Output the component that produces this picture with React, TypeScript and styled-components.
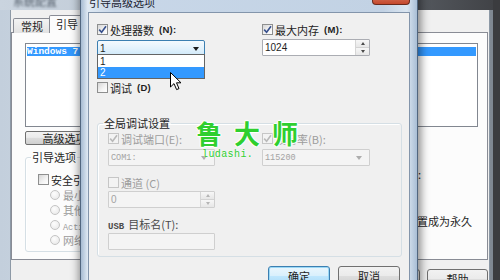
import React from 'react';
import styled, { createGlobalStyle, css } from 'styled-components';

const CJK = `'Noto Sans CJK SC', 'Noto Sans', sans-serif`;
const MONO = `'Liberation Mono', 'DejaVu Sans Mono', monospace`;
const SANS = `'Liberation Sans', Arial, sans-serif`;

const GlobalStyle = createGlobalStyle`
  html, body { margin: 0; padding: 0; }
  body {
    background: #3b3c3f;
    font-family: ${CJK};
    font-size: 11px;
    color: #1e1e1e;
  }
  * { box-sizing: border-box; }
`;

const Desktop = styled.div`
  position: relative;
  width: 500px;
  height: 280px;
  overflow: hidden;
  background: #3b3c3f;
  white-space: nowrap;
`;

/* ---------- 系统配置 (background window) ---------- */

const MainWindow = styled.div`
  position: absolute;
  z-index: 0;
  left: 0;
  top: -14px;
  width: 493px;
  height: 330px;
  display: flex;
  flex-direction: column;
  padding: 0 3px 0 10px;
  background: linear-gradient(90deg, #c3cfdc 0%, #d4dde7 40%, #b9c4d0 80%, #7e8791 100%);
`;

const MainTitleBar = styled.div`
  height: 24px;
  margin: 0 -3px 0 -10px;
  padding: 0 0 2px 13px;
  display: flex;
  align-items: flex-end;
  background: linear-gradient(90deg, #cad4df 0%, #bcc7d3 40%, #55595f 84%, #414347 100%);
`;

const MainTitle = styled.span`
  line-height: 14px;
  color: #56616d;
  filter: blur(0.8px);
`;

const MainClient = styled.div`
  flex: 1;
  display: flex;
  flex-direction: column;
  background: #f0f0f0;
  border-left: 1px solid #8d99a6;
  border-right: 1px solid #8d99a6;
`;

const TabStrip = styled.div`
  height: 23px;
  padding-left: 2px;
  margin-bottom: -1px;
  display: flex;
  align-items: flex-end;
  position: relative;
  z-index: 1;
`;

const Tab = styled.div<{ $active?: boolean }>`
  height: ${({ $active }) => ($active ? 18 : 15)}px;
  line-height: ${({ $active }) => ($active ? 16 : 14)}px;
  padding: 0 ${({ $active }) => ($active ? 6 : 7)}px;
  margin-left: ${({ $active }) => ($active ? -2 : 0)}px;
  border: 1px solid #898c95;
  border-bottom: none;
  border-radius: 2px 2px 0 0;
  background: ${({ $active }) => ($active ? '#fcfcfc' : 'linear-gradient(#f3f3f3, #e2e2e2)')};
`;

const TabPanel = styled.div`
  height: 228px;
  margin-right: 1px;
  padding: 10px 9px 0 13px;
  display: flex;
  flex-direction: column;
  border: 1px solid #898c95;
  background: #fcfcfc;
`;

const ListBox = styled.div`
  height: 84px;
  padding: 3px 1px;
  border: 1px solid #828790;
  background: #fff;
`;

const ListRow = styled.div<{ $selected?: boolean }>`
  height: 9px;
  line-height: 9px;
  font-family: ${MONO};
  font-size: 9.5px;
  font-weight: 700;
  color: ${({ $selected }) => ($selected ? '#fff' : '#1e1e1e')};
  background: ${({ $selected }) => ($selected ? '#3399ff' : 'transparent')};
`;

const PanelBody = styled.div`
  display: flex;
  margin-top: 4px;
`;

const LeftCol = styled.div`
  width: 290px;
  flex: none;
  display: flex;
  flex-direction: column;
`;

const ButtonLine = styled.div`
  display: flex;
  gap: 6px;
`;

const SmallButton = styled.div`
  width: 90px;
  height: 14px;
  line-height: 12px;
  text-align: center;
  border: 1px solid #707070;
  border-radius: 2px;
  background: linear-gradient(#f2f2f2 0%, #ebebeb 45%, #dddddd 50%, #cfcfcf 100%);

  &:first-child {
    width: 104px;
  }
`;

const GroupBox = styled.fieldset<{ $top: number }>`
  margin: ${({ $top }) => $top}px 0 0 0;
  padding: 0;
  min-width: 0;
  border: 1px solid #d5dfe5;
  border-radius: 3px;
  box-shadow: inset 1px 1px 0 #fff;
`;

const Legend = styled.legend<{ $lh: number }>`
  margin-left: 5px;
  padding: 0 1px;
  line-height: ${({ $lh }) => $lh}px;
  color: #1e1e1e;
`;

const BootGroupBody = styled.div`
  padding: 9px 0 4px 12px;
  display: flex;
  flex-direction: column;
`;

const RadioRow = styled.div`
  height: 15px;
  margin-left: 12px;
  display: flex;
  align-items: center;
  gap: 3px;
  color: #9a9a9a;
`;

const RadioDot = styled.span`
  width: 10px;
  height: 10px;
  border-radius: 50%;
  border: 1px solid #c4c4c4;
  background: radial-gradient(circle at 40% 35%, #fdfdfd, #e6e6e6);
`;

const Latin = styled.span`
  font-family: ${MONO};
  font-size: 8.5px;
`;

const RightCol = styled.div`
  flex: 1;
  min-width: 0;
  display: flex;
  flex-direction: column;
  align-items: flex-end;
`;

const TimeoutLabel = styled.div`
  margin: 36px 57px 0 0;
  line-height: 15px;
`;

const PermanentRow = styled.div`
  margin: 31px 6px 0 0;
`;

const MainFooter = styled.div`
  margin-top: 9px;
  padding-right: 1px;
  display: flex;
  justify-content: flex-end;
  gap: 7px;
`;

/* ---------- shared controls ---------- */

const Button = styled.div<{ $default?: boolean; $w: number }>`
  width: ${({ $w }) => $w}px;
  height: 21px;
  line-height: 19px;
  text-align: center;
  border: 1px solid #707070;
  border-radius: 3px;
  background: linear-gradient(#f2f2f2 0%, #ebebeb 45%, #dddddd 50%, #cfcfcf 100%);
  ${({ $default }) =>
    $default &&
    css`
      border-color: #3c7fb1;
      box-shadow: inset 0 0 0 1px #9ad8f6;
      background: linear-gradient(#eaf6fd 0%, #d9f0fc 45%, #bee6fd 50%, #a7d9f5 100%);
    `}
`;

const CheckRow = styled.div<{ $disabled?: boolean; $tone?: string }>`
  height: 15px;
  display: flex;
  align-items: center;
  gap: 2px;
  color: ${({ $disabled, $tone }) => $tone || ($disabled ? '#9d9d9d' : '#1e1e1e')};
`;

const Box = styled.span<{ $disabled?: boolean }>`
  width: 11px;
  height: 11px;
  flex: none;
  display: inline-flex;
  align-items: center;
  justify-content: center;
  border: 1px solid ${({ $disabled }) => ($disabled ? '#c6c6c6' : '#8e8f8f')};
  background: ${({ $disabled }) =>
    $disabled ? '#f3f3f3' : 'linear-gradient(135deg, #d6d6d6 0%, #f4f4f4 60%, #ffffff 100%)'};
`;

const Hint = styled.span`
  margin-left: 3px;
  font-family: ${SANS};
  font-size: 9.5px;
  font-weight: 700;
  letter-spacing: 0.3px;
`;

type CheckProps = { label: React.ReactNode; hint?: string; checked?: boolean; disabled?: boolean; tone?: string };

const Check = ({ label, hint, checked, disabled, tone }: CheckProps) => (
  <CheckRow $disabled={disabled} $tone={tone}>
    <Box $disabled={disabled}>
      {checked && (
        <svg width="9" height="9" viewBox="0 0 9 9">
          <path
            d="M1.2 4.6 L3.6 7.2 L8 1.2"
            fill="none"
            stroke={disabled ? '#b9b9b9' : '#37508d'}
            strokeWidth="1.6"
          />
        </svg>
      )}
    </Box>
    <span>{label}</span>
    {hint && <Hint>{hint}</Hint>}
  </CheckRow>
);

const Field = styled.div<{ $disabled?: boolean; $focused?: boolean; $top?: number }>`
  height: 17px;
  margin-top: ${({ $top }) => $top ?? 3}px;
  display: flex;
  align-items: stretch;
  border: 1px solid ${({ $disabled, $focused }) => ($focused ? '#3c7fb1' : $disabled ? '#cfcfcf' : '#abadb3')};
  border-radius: ${({ $focused }) => ($focused ? 2 : 1)}px;
  background: ${({ $disabled, $focused }) =>
    $focused ? 'linear-gradient(#f4fafe 0%, #e3f2fc 50%, #cde8f9 100%)' : $disabled ? '#f4f4f4' : '#fff'};
`;

const FieldText = styled.div<{ $mono?: boolean; $disabled?: boolean }>`
  flex: 1;
  padding-left: 2px;
  display: flex;
  align-items: center;
  font-family: ${({ $mono }) => ($mono ? MONO : SANS)};
  font-size: ${({ $mono }) => ($mono ? 8.5 : 10)}px;
  color: ${({ $disabled }) => ($disabled ? '#a3a3a3' : '#1e1e1e')};
`;

const DropArrow = styled.span<{ $disabled?: boolean; $right: number }>`
  align-self: center;
  margin-right: ${({ $right }) => $right}px;
  width: 0;
  height: 0;
  border-left: 3.5px solid transparent;
  border-right: 3.5px solid transparent;
  border-top: 4px solid ${({ $disabled }) => ($disabled ? '#adadad' : '#1b1b1b')};
`;

const SpinButtons = styled.div`
  width: 14px;
  display: flex;
  flex-direction: column;
  border-left: 1px solid #d6d6d6;
`;

const SpinHalf = styled.div<{ $down?: boolean; $disabled?: boolean }>`
  flex: 1;
  display: flex;
  align-items: center;
  justify-content: center;
  background: linear-gradient(#f7f7f7, #e7e7e7);
  border-top: ${({ $down }) => ($down ? '1px solid #d3d3d3' : 'none')};

  &::after {
    content: '';
    width: 0;
    height: 0;
    border-left: 2.5px solid transparent;
    border-right: 2.5px solid transparent;
    ${({ $down, $disabled }) =>
      $down
        ? `border-top: 3px solid ${$disabled ? '#b5b5b5' : '#4a4a4a'};`
        : `border-bottom: 3px solid ${$disabled ? '#b5b5b5' : '#4a4a4a'};`}
  }
`;

/* ---------- 引导高级选项 (dialog) ---------- */

const Dialog = styled.div`
  position: absolute;
  z-index: 1;
  left: 80px;
  top: -12px;
  width: 338px;
  height: 330px;
  padding: 0 7px;
  display: flex;
  flex-direction: column;
  border: 1px solid #51667f;
  border-radius: 7px 7px 0 0;
  background: linear-gradient(90deg, #a6bbd2 0%, #dfe9f3 2%, #c8d7e8 10%, #c2d2e4 90%, #dbe6f1 97%, #a9bed5 100%);
  box-shadow: 1px 0 8px 2px rgba(0, 0, 0, 0.45);
`;

const DialogTitleBar = styled.div`
  height: 23px;
  padding: 0 0 3px 1px;
  display: flex;
  align-items: flex-end;
`;

const DialogTitle = styled.span`
  line-height: 14px;
  color: #1a2230;
`;

const CloseButton = styled.div`
  position: absolute;
  top: -1px;
  right: 7px;
  width: 38px;
  height: 17px;
  border: 1px solid #6b2a1c;
  border-top: none;
  border-radius: 0 0 4px 4px;
  background: linear-gradient(#e8a58f 0%, #d5735a 50%, #c4482c 100%);
`;

const DialogClient = styled.div`
  flex: 1;
  padding: 9px 7px 0 8px;
  display: flex;
  flex-direction: column;
  background: #f0f0f0;
  border: 1px solid #8395ab;
`;

const TwoCols = styled.div<{ $first: number; $gap: number }>`
  display: grid;
  grid-template-columns: ${({ $first }) => $first}px 108px;
  column-gap: ${({ $gap }) => $gap}px;
`;

const Cell = styled.div`
  display: flex;
  flex-direction: column;
`;

const DropAnchor = styled.div`
  position: relative;
`;

const DropList = styled.div`
  position: absolute;
  top: 17px;
  left: 0;
  right: 0;
  z-index: 2;
  padding-top: 1px;
  border: 1px solid #646464;
  background: #fff;
`;

const DropItem = styled.div<{ $hot?: boolean }>`
  height: 11px;
  line-height: 11px;
  padding-left: 2px;
  font-family: ${SANS};
  font-size: 10px;
  color: ${({ $hot }) => ($hot ? '#fff' : '#1e1e1e')};
  background: ${({ $hot }) => ($hot ? '#3399ff' : '#fff')};
`;

const DebugRow = styled.div`
  margin-top: 23px;
`;

const GlobalGroupBody = styled.div`
  padding: 1px 0 6px 10px;
  display: flex;
  flex-direction: column;
`;

const Stack = styled.div`
  width: 107px;
  display: flex;
  flex-direction: column;
`;

const Spaced = styled.div<{ $top: number }>`
  margin-top: ${({ $top }) => $top}px;
`;

const UsbLabel = styled.div`
  height: 15px;
  line-height: 15px;
  color: #4a4a4a;
`;

const UsbText = styled.span`
  font-family: ${MONO};
  font-size: 9px;
  font-weight: 700;
  margin-right: 4px;
`;

const DialogFooter = styled.div`
  margin-top: 9px;
  padding-right: 2px;
  display: flex;
  justify-content: flex-end;
  gap: 8px;
`;

/* ---------- overlays ---------- */

const Watermark = styled.div`
  position: absolute;
  left: 196px;
  top: 120px;
  z-index: 5;
  display: flex;
  flex-direction: column;
  color: #2fcf2f;
  pointer-events: none;
`;

const MarkTitle = styled.div`
  font-size: 26px;
  line-height: 26px;
  font-weight: 700;
  letter-spacing: 12px;
  text-shadow: 1px 0 0 #fff, -1px 0 0 #fff, 0 1px 0 #fff, 0 -1px 0 #fff, 0 0 3px #fff;
`;

const MarkUrl = styled.div`
  margin: 3px 0 0 6px;
  font-family: ${MONO};
  font-size: 10px;
  line-height: 12px;
  letter-spacing: 0.4px;
  text-shadow: 0 0 2px #fff;
`;

const Cursor = styled.svg`
  position: absolute;
  left: 170px;
  top: 72px;
  z-index: 6;
`;

const Radio = ({ children }: { children: React.ReactNode }) => (
  <RadioRow>
    <RadioDot />
    <span>{children}</span>
  </RadioRow>
);

const App = () => {
  return (
    <>
      <GlobalStyle />
      <Desktop>
        <MainWindow>
          <MainTitleBar>
            <MainTitle>系统配置</MainTitle>
          </MainTitleBar>
          <MainClient>
            <TabStrip>
              <Tab>常规</Tab>
              <Tab $active>引导</Tab>
              <Tab>服务</Tab>
              <Tab>启动</Tab>
              <Tab>工具</Tab>
            </TabStrip>
            <TabPanel>
              <ListBox>
                <ListRow $selected>Windows 7 (C:\Windows) : 当前 OS; 默认 OS</ListRow>
              </ListBox>
              <PanelBody>
                <LeftCol>
                  <ButtonLine>
                    <SmallButton>高级选项(V)...</SmallButton>
                    <SmallButton>设为默认值(S)</SmallButton>
                    <SmallButton>删除(D)</SmallButton>
                  </ButtonLine>
                  <GroupBox $top={6}>
                    <Legend $lh={12}>引导选项</Legend>
                    <BootGroupBody>
                      <Check label="安全引导(F)" />
                      <Radio>最小(M)</Radio>
                      <Radio>其他外壳(L)</Radio>
                      <Radio>
                        <Latin>Active Directory</Latin> 修复(P)
                      </Radio>
                      <Radio>网络(N)</Radio>
                    </BootGroupBody>
                  </GroupBox>
                </LeftCol>
                <RightCol>
                  <TimeoutLabel>超时(T):</TimeoutLabel>
                  <PermanentRow>
                    <Check label="使所有引导设置成为永久" />
                  </PermanentRow>
                </RightCol>
              </PanelBody>
            </TabPanel>
            <MainFooter>
              <Button $w={61}>确定</Button>
              <Button $w={61}>取消</Button>
              <Button $w={61}>应用(A)</Button>
              <Button $w={61}>帮助</Button>
            </MainFooter>
          </MainClient>
        </MainWindow>

        <Dialog>
          <DialogTitleBar>
            <DialogTitle>引导高级选项</DialogTitle>
          </DialogTitleBar>
          <CloseButton />
          <DialogClient>
            <TwoCols $first={108} $gap={57}>
              <Cell>
                <Check checked label="处理器数" hint="(N):" />
                <DropAnchor>
                  <Field $focused>
                    <FieldText>1</FieldText>
                    <DropArrow $right={5} />
                  </Field>
                  <DropList>
                    <DropItem>1</DropItem>
                    <DropItem $hot>2</DropItem>
                  </DropList>
                </DropAnchor>
              </Cell>
              <Cell>
                <Check checked label="最大内存" hint="(M):" />
                <Field $top={2}>
                  <FieldText>1024</FieldText>
                  <SpinButtons>
                    <SpinHalf />
                    <SpinHalf $down />
                  </SpinButtons>
                </Field>
              </Cell>
            </TwoCols>

            <DebugRow>
              <Check label="调试" hint="(D)" />
            </DebugRow>

            <GroupBox $top={22}>
              <Legend $lh={13}>全局调试设置</Legend>
              <GlobalGroupBody>
                <TwoCols $first={107} $gap={47}>
                  <Cell>
                    <Check checked disabled label="调试端口(E):" />
                    <Field $disabled>
                      <FieldText $mono $disabled>COM1:</FieldText>
                      <DropArrow $disabled $right={7} />
                    </Field>
                  </Cell>
                  <Cell>
                    <Check checked disabled label="波特率(B):" />
                    <Field $disabled>
                      <FieldText $mono $disabled>115200</FieldText>
                      <DropArrow $disabled $right={7} />
                    </Field>
                  </Cell>
                </TwoCols>
                <Stack>
                  <Spaced $top={9}>
                    <Check disabled label="通道 (C)" />
                  </Spaced>
                  <Field $disabled $top={1}>
                    <FieldText $disabled>0</FieldText>
                    <SpinButtons>
                      <SpinHalf $disabled />
                      <SpinHalf $down $disabled />
                    </SpinButtons>
                  </Field>
                  <Spaced $top={9}>
                    <UsbLabel>
                      <UsbText>USB</UsbText>目标名(T):
                    </UsbLabel>
                  </Spaced>
                  <Field $disabled $top={1} />
                </Stack>
              </GlobalGroupBody>
            </GroupBox>

            <DialogFooter>
              <Button $default $w={62}>
                确定
              </Button>
              <Button $w={62}>取消</Button>
            </DialogFooter>
          </DialogClient>
        </Dialog>

        <Watermark>
          <MarkTitle>鲁大师</MarkTitle>
          <MarkUrl>ludashi.</MarkUrl>
        </Watermark>

        <Cursor width="12" height="19" viewBox="0 0 12 19">
          <path
            d="M0.5 0.5 L0.5 15 L4 11.6 L6.6 17.6 L9 16.6 L6.5 10.8 L11 10.8 Z"
            fill="#fff"
            stroke="#000"
            strokeWidth="1"
            strokeLinejoin="round"
          />
        </Cursor>
      </Desktop>
    </>
  );
};

export default App;
